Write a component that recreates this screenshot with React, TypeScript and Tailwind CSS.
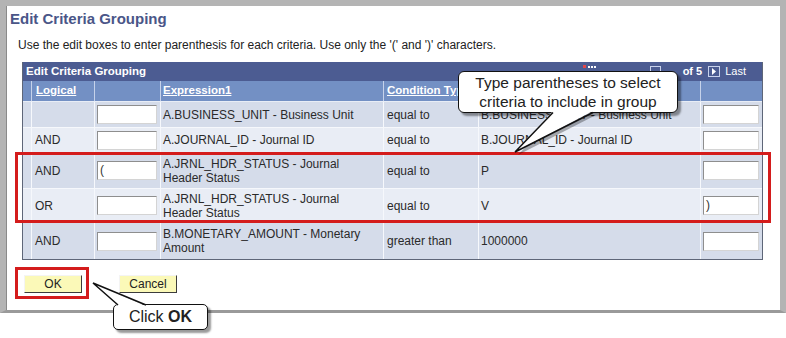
import React from 'react'

interface Row {
  logic: string
  left: string
  expr1: string
  cond: string
  expr2: string
  right: string
  h: string
  bg: string
}

const rows: Row[] = [
  { logic: '', left: '', expr1: 'A.BUSINESS_UNIT - Business Unit', cond: 'equal to', expr2: 'B.BUSINESS_UNIT - Business Unit', right: '', h: 'h-[26px]', bg: 'bg-[#d5dcea]' },
  { logic: 'AND', left: '', expr1: 'A.JOURNAL_ID - Journal ID', cond: 'equal to', expr2: 'B.JOURNAL_ID - Journal ID', right: '', h: 'h-[25px]', bg: 'bg-[#e9edf5]' },
  { logic: 'AND', left: '(', expr1: 'A.JRNL_HDR_STATUS - Journal Header Status', cond: 'equal to', expr2: 'P', right: '', h: 'h-[36px]', bg: 'bg-[#d5dcea]' },
  { logic: 'OR', left: '', expr1: 'A.JRNL_HDR_STATUS - Journal Header Status', cond: 'equal to', expr2: 'V', right: ')', h: 'h-[34px]', bg: 'bg-[#e9edf5]' },
  { logic: 'AND', left: '', expr1: 'B.MONETARY_AMOUNT - Monetary Amount', cond: 'greater than', expr2: '1000000', right: '', h: 'h-[36px]', bg: 'bg-[#d5dcea]' },
]

function EditBox({ value, w }: { value: string; w: string }) {
  return (
    <div className={`${w} h-[19px] bg-white border border-t-[#8e8e8e] border-l-[#8e8e8e] border-r-[#d4d4d4] border-b-[#d4d4d4] pl-[2px] text-[12px] leading-[17px] text-[#333]`}>
      {value}
    </div>
  )
}

function Button({ label }: { label: string }) {
  return (
    <div className="w-[58px] h-[18px] bg-[#fbf9b8] border border-t-[#f4f4f4] border-l-[#f4f4f4] border-r-[#3c3c3c] border-b-[#3c3c3c] flex items-center justify-center text-[12px] text-[#222]">
      {label}
    </div>
  )
}

export default function App() {
  return (
    <div className="relative w-[786px] h-[338px] bg-white overflow-hidden font-['Liberation_Sans',Arial,sans-serif]">
      {/* Window frame */}
      <div className="h-[313px] border-t-[6px] border-l-[6px] border-r-[6px] border-b-[3px] border-t-[#b4b4b4] border-l-[#b4b4b4] border-r-[#b4b4b4] border-b-[#9a9a9a]">
        <div className="h-full bg-white border-l border-[#8a8a8a]">
          <div className="pl-[3px] pt-[4px] text-[15px] leading-[18px] font-bold text-[#4a5688]">
            Edit Criteria Grouping
          </div>
          <div className="pl-[11px] mt-[10px] text-[12px] leading-[14px] text-[#222]">
            Use the edit boxes to enter parenthesis for each criteria. Use only the '(' and ')' characters.
          </div>

          {/* Grid */}
          <div className="ml-[15px] mt-[10px] w-[741px] border-l border-r border-b border-[#5e6678]">
            <div className="h-[19px] bg-[#4c5c92] flex items-center pl-[3px] text-white text-[11.5px] font-bold">
              <span>Edit Criteria Grouping</span>
              <div className="ml-auto flex items-center pr-[16px]">
                <svg width="13" height="5" viewBox="0 0 13 5" className="mb-[9px]">
                  <rect x="0" y="0" width="3" height="3" fill="#e2474a" />
                  <rect x="5" y="1" width="2" height="2" fill="#ffffff" />
                  <rect x="8" y="1" width="2" height="2" fill="#ffffff" />
                  <rect x="11" y="1" width="2" height="2" fill="#ffffff" />
                </svg>
                <div className="ml-[54px] w-[11px] h-[11px] border border-[#c8d2ec]" />
                <span className="ml-[22px] text-[11px]">of 5</span>
                <div className="ml-[6px] w-[12px] h-[11px] border border-[#c8d2ec] flex items-center justify-center">
                  <svg width="6" height="7" viewBox="0 0 6 7">
                    <path d="M1 0 L5 3.5 L1 7 Z" fill="#ffffff" />
                  </svg>
                </div>
                <span className="ml-[5px] text-[11px] font-normal">Last</span>
              </div>
            </div>

            <div className="h-[21px] bg-[#7390c4] flex text-white text-[11.5px] font-bold border-b border-[#e8edf6]">
              <div className="w-[9px] border-r border-[#c6d2ea]" />
              <div className="w-[63px] border-r border-[#c6d2ea] pl-[4px] flex items-center underline">Logical</div>
              <div className="w-[66px] border-r border-[#c6d2ea]" />
              <div className="w-[223px] border-r border-[#c6d2ea] pl-[2px] flex items-center underline">Expression1</div>
              <div className="w-[95px] border-r border-[#c6d2ea] pl-[3px] flex items-center underline whitespace-nowrap overflow-hidden">Condition Type</div>
              <div className="w-[222px] border-r border-[#c6d2ea] pl-[2px] flex items-center underline">Expression2</div>
              <div className="flex-1" />
            </div>

            {rows.map((r, i) => (
              <div key={i} className={`${r.h} ${r.bg} flex text-[12px] leading-[14px] text-[#2a2a2a] ${i < rows.length - 1 ? 'border-b border-[#f6f8fc]' : ''}`}>
                <div className="w-[9px] border-r border-[#f6f8fc]" />
                <div className="w-[63px] border-r border-[#f6f8fc] pl-[3px] flex items-center">{r.logic}</div>
                <div className="w-[66px] border-r border-[#f6f8fc] pl-[2px] flex items-center">
                  <EditBox value={r.left} w="w-[60px]" />
                </div>
                <div className="w-[223px] border-r border-[#f6f8fc] pl-[2px] pr-[8px] flex items-center">{r.expr1}</div>
                <div className="w-[95px] border-r border-[#f6f8fc] pl-[3px] flex items-center">{r.cond}</div>
                <div className="w-[222px] border-r border-[#f6f8fc] pl-[2px] flex items-center">{r.expr2}</div>
                <div className="flex-1 pl-[2px] flex items-center">
                  <EditBox value={r.right} w="w-[56px]" />
                </div>
              </div>
            ))}
          </div>

          {/* Buttons */}
          <div className="ml-[17px] mt-[15px] flex gap-[37px]">
            <Button label="OK" />
            <Button label="Cancel" />
          </div>
        </div>
      </div>

      {/* Red highlight boxes */}
      <div className="absolute left-[15px] top-[152px] w-[756px] h-[71px] border-[3px] border-[#d41c1c]" />
      <div className="absolute left-[15px] top-[267px] w-[74px] h-[32px] border-[3px] border-[#d41c1c]" />

      {/* Callout shadows */}
      <svg className="absolute left-0 top-0 pointer-events-none" width="786" height="338">
        <polygon points="556,115 596,115 518,155" fill="#000" opacity="0.3" />
        <polygon points="121,306 149,306 96,286" fill="#000" opacity="0.3" />
      </svg>

      {/* Top callout */}
      <div className="absolute left-[458px] top-[71px] w-[220px] h-[42px] bg-white border-[1.5px] border-[#111] rounded-[6px] shadow-[3px_3px_2px_rgba(0,0,0,0.4)] flex flex-col items-center justify-center text-[15.5px] leading-[19px] text-[#222]">
        <span>Type parentheses to select</span>
        <span>criteria to include in group</span>
      </div>

      {/* Bottom callout */}
      <div className="absolute left-[113px] top-[304px] w-[95px] h-[26px] bg-white border-[1.5px] border-[#111] rounded-[5px] shadow-[3px_3px_2px_rgba(0,0,0,0.4)] flex items-center justify-center text-[16px] text-[#222]">
        <span>
          Click <b>OK</b>
        </span>
      </div>

      {/* Callout tails */}
      <svg className="absolute left-0 top-0 pointer-events-none" width="786" height="338">
        <polygon points="553,111 593,111 515,152" fill="#fff" />
        <polyline points="553,112.5 515,152 593,112.5" fill="none" stroke="#111" strokeWidth="1.5" />
        <polygon points="118,306 146,306 93,283" fill="#fff" />
        <polyline points="118,305 93,283 146,305" fill="none" stroke="#111" strokeWidth="1.5" />
      </svg>
    </div>
  )
}
